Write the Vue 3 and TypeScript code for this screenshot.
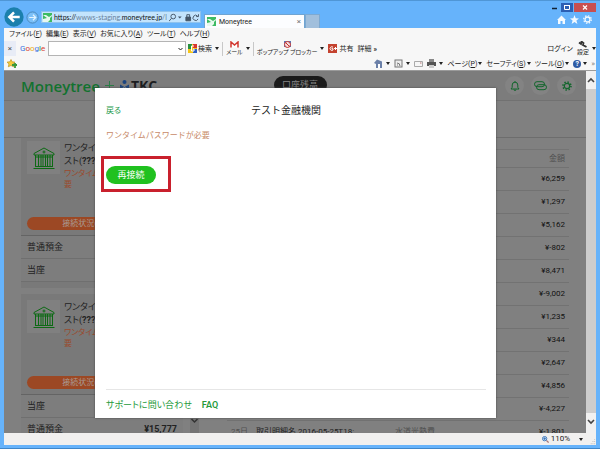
<script setup lang="ts">
interface Card {
  id: number
  rows: { name: string; amount: string }[]
}

interface Entry {
  day: string
  name: string
  category: string
  amount: string
}

const menus = [
  { label: 'ファイル', key: 'F' },
  { label: '編集', key: 'E' },
  { label: '表示', key: 'V' },
  { label: 'お気に入り', key: 'A' },
  { label: 'ツール', key: 'T' },
  { label: 'ヘルプ', key: 'H' },
]

const commands = [
  { label: 'ページ', key: 'P' },
  { label: 'セーフティ', key: 'S' },
  { label: 'ツール', key: 'O' },
]

const cards: Card[] = [
  { id: 1, rows: [{ name: '普通預金', amount: '' }, { name: '当座', amount: '' }] },
  { id: 2, rows: [{ name: '当座', amount: '' }, { name: '普通預金', amount: '¥15,777' }] },
]

const amounts = ['¥6,259', '¥1,297', '¥5,162', '¥-802', '¥8,471', '¥-9,002', '¥1,235', '¥344', '¥2,647', '¥4,856', '¥-4,227', '¥-1,801']
const entries: Entry[] = amounts.map((amount) => ({
  day: '25日',
  name: '取引明細名 2016-05-25T18:',
  category: '水道光熱費',
  amount,
}))
</script>

<template>
  <div class="window">
    <header class="titlebar">
      <div class="nav">
        <button class="back" aria-label="戻る">
          <svg viewBox="0 0 28 28"><circle cx="14" cy="14" r="13.5" fill="#1b80ad" /><path d="M22 14H8M14 7.500 7.500 14l6.500 6.500" fill="none" stroke="#fff" stroke-width="3.500" /></svg>
        </button>
        <button class="forward" aria-label="進む">
          <svg viewBox="0 0 14 14"><circle cx="7" cy="7" r="6" fill="#7cc0f8" stroke="#4a86b8" /><path d="M3.500 7h7M7.500 4l3 3-3 3" fill="none" stroke="#e4f4ff" stroke-width="1.300" /></svg>
        </button>
        <div class="address">
          <svg class="fav" viewBox="0 0 9 9"><rect width="9" height="9" fill="#3dbb63" /><path d="M0 2h3l3 2 3-2v1L7 5v2L5 9H0V6l4-1z" fill="#e8f8ee" /></svg>
          <span class="url">https://<i>wwws-staging.</i>moneytree.jp<i>/li</i></span>
          <svg class="tools" viewBox="0 0 32 9" fill="none" stroke="#456" stroke-width="1"><circle cx="4.500" cy="3.500" r="2.500" /><path d="M2.500 5.500 0 8.500" /><path d="M9.500 3.500h4l-2 2z" fill="#456" stroke="none" /><path d="M18 4h5v4h-5z" fill="#456" /><path d="M19 4V1.500h3V4" /><path d="M30.500 3A2.800 2.800 0 1 0 31 6M31.500 1v2.500H29" /></svg>
        </div>
      </div>
      <div class="tab">
        <svg class="fav" viewBox="0 0 9 9"><rect width="9" height="9" fill="#3dbb63" /><path d="M0 2h3l3 2 3-2v1L7 5v2L5 9H0V6l4-1z" fill="#e8f8ee" /></svg>
        <span>Moneytree</span>
        <button aria-label="タブを閉じる">×</button>
      </div>
      <button class="newtab" aria-label="新しいタブ"></button>
      <div class="corner">
        <div class="winbuttons">
          <button class="min" aria-label="最小化"><svg viewBox="0 0 12 9"><path d="M4 5.500h5" stroke="#123" stroke-width="1.500" /></svg></button>
          <button class="max" aria-label="最大化"><svg viewBox="0 0 12 9"><path d="M3.500 2.500h5v4h-5zM3 2.500h6" fill="none" stroke="#fff" stroke-width="1" /></svg></button>
          <button class="close" aria-label="閉じる"><svg viewBox="0 0 22 9"><path d="m9 2.500 4 4m0-4-4 4" stroke="#fff" stroke-width="1.200" /></svg></button>
        </div>
        <div class="stars">
          <svg viewBox="0 0 9 9"><path d="M0 5 4.500.5 9 5H8v4H5.500V6h-2v3H1V5z" fill="#f4faff" /></svg>
          <svg viewBox="0 0 9 9"><path d="m4.500 0 1.200 3.200L9 3.400 6.400 5.500l1 3.400-2.900-2-2.900 2 1-3.400L0 3.400l3.300-.2z" fill="#f4faff" /></svg>
          <svg viewBox="0 0 9 9" fill="none" stroke="#f4faff"><circle cx="4.500" cy="4.500" r="2.500" stroke-width="1.300" /><circle cx="4.500" cy="4.500" r="3.800" stroke-width="1.200" stroke-dasharray="1.500 1.480" /></svg>
        </div>
      </div>
    </header>

    <nav class="menubar">
      <button v-for="m in menus" :key="m.key">{{ m.label }}(<u>{{ m.key }}</u>)</button>
    </nav>

    <div class="googlebar">
      <button class="dismiss" aria-label="バーを閉じる">×</button>
      <span class="google"><b>G</b><b>o</b><b>o</b><b>g</b><b>l</b><b>e</b></span>
      <div class="combo">
        <input type="text" aria-label="Google 検索" />
        <svg viewBox="0 0 5 4"><path d="m.5 1 2 2 2-2" fill="none" stroke="#222" /></svg>
      </div>
      <button class="row search"><svg class="ico" viewBox="0 0 9 9"><rect width="9" height="9" fill="#f5c518" /><path d="M0 0h4v5H0z" fill="#27913f" /><path d="M5 0h4v4H5z" fill="#d6362f" /><path d="M5 5h4v4H5z" fill="#2e60c4" /><path d="M6 2H3.500v5H6V5H5" stroke="#fff" fill="none" /></svg>検索<s class="caret"></s></button>
      <i class="sep"></i>
      <button class="row"><span class="stack"><svg class="mailico" viewBox="0 0 9 7"><path d="M1 6.500V1l3.500 3L8 1v5.500" fill="#fff" stroke="#d2372f" stroke-width="1.500" /></svg>メール</span><s class="caret"></s></button>
      <i class="sep"></i>
      <button class="row"><span class="stack"><svg class="mailico" viewBox="0 0 9 7"><rect x="1" width="7" height="6" fill="#5878b8" /><circle cx="4.500" cy="3.500" r="3" fill="#f4dada" stroke="#c5302c" /><path d="m2.500 1.500 4 4" stroke="#c5302c" /></svg>ポップアップ ブロッカー</span><s class="caret"></s></button>
      <button class="row share"><svg class="ico" viewBox="0 0 9 9"><rect width="9" height="9" fill="#c4422f" /><path d="M5 3.200A1.800 1.800 0 1 0 5 6V4.700H3.500M6 4.500h3M7.500 3v3" stroke="#fff" fill="none" /></svg>共有</button>
      <button class="row more">詳細 <b>»</b></button>
      <button class="row login">ログイン</button>
      <button class="row"><span class="stack"><svg class="mailico" viewBox="0 0 9 7"><path d="M1 1.500 3 3 3.500.5 5.500 2 5 4l3.500 2" fill="none" stroke="#333" stroke-width="1.800" /></svg>設定</span><s class="caret"></s></button>
    </div>

    <div class="commandbar">
      <svg class="favadd" viewBox="0 0 10 9"><path d="m4 .5 1.200 2.300 2.800.3L6 5l.5 2.800L4 6.500 1.300 7.800 1.900 5 0 3.100l2.800-.3z" fill="#f7cb3b" stroke="#b08a16" stroke-width=".6" /><path d="M5 6h5M8 4v5" stroke="#3b9a3a" stroke-width="1.800" /></svg>
      <div class="cmds">
        <button class="row" aria-label="ホーム"><svg class="ico" viewBox="0 0 9 9"><path d="m0 4 3-3.500 5 2V9H2V5z" fill="#6b80a8" /><path d="M4 5h2v4H4z" fill="#fff" /></svg><s class="caret"></s></button>
        <button class="row" aria-label="フィード"><svg class="ico" viewBox="0 0 9 9"><rect x="1" y="1" width="7" height="7" fill="#eee" stroke="#777" /><path d="M3 4a3 3 0 0 1 3 3M3 6h1" fill="none" stroke="#777" /></svg><s class="caret"></s></button>
        <button class="row" aria-label="メール"><svg class="ico" viewBox="0 0 9 9"><path d="M.5 2.500h8v5h-8z" fill="#f6f6f6" stroke="#aaa" /><path d="M6 4h1.500" stroke="#b77" /></svg></button>
        <button class="row" aria-label="印刷"><svg class="ico" viewBox="0 0 9 9"><path d="M2 0h5v3H2z" fill="#888" /><path d="M0 3h9v4H0z" fill="#555" /><path d="M2 6h5v3H2z" fill="#ccc" /></svg><s class="caret"></s></button>
        <button v-for="c in commands" :key="c.key" class="row text">{{ c.label }}(<u>{{ c.key }}</u>)<s class="caret"></s></button>
        <button class="row help" aria-label="ヘルプ"><span>?</span><s class="caret"></s></button>
        <small>»</small>
      </div>
    </div>

    <div class="viewport">
      <main class="page">
        <div class="apphead">
          <span class="logo">Moneytree</span>
          <svg class="plus" viewBox="0 0 9 9"><path d="M0 4.500h9M4.500 0v9" stroke="#2c7d48" /></svg>
          <svg class="tkcmark" viewBox="0 0 11 11"><circle cx="5.500" cy="2" r="2" fill="#1c4580" /><path d="M1 4.500 5.500 7 10 4.500V9l1 2H0l1-2z" fill="#1c4580" /><path d="M2.500 9 5.500 7l3 2" stroke="#8090a0" fill="none" /></svg>
          <span class="tkc">TKC</span>
          <div class="pillwrap"><button class="pill">口座残高</button></div>
          <div class="actions">
            <button aria-label="通知"><svg viewBox="0 0 10 10"><path d="M1 8h8L7.800 6.300V4A2.800 2.800 0 0 0 2.200 4v2.300zM4 8.500a1 1 0 0 0 2 0M5 1V0" /></svg></button>
            <button aria-label="メッセージ"><svg class="wide" viewBox="0 0 13 10"><rect x=".5" y=".7" width="10" height="5" rx="2.500" /><rect x="2.500" y="3.700" width="10" height="5" rx="2.500" /></svg></button>
            <button aria-label="設定"><svg viewBox="0 0 10 10"><circle cx="5" cy="5" r="2.700" stroke-width="1.200" /><circle cx="5" cy="5" r="4" stroke-width="1.600" stroke-dasharray="1.400 1.740" /></svg></button>
          </div>
        </div>
        <div class="subhead"></div>
        <div class="columns">
          <aside class="cards">
            <article v-for="c in cards" :key="c.id" class="card">
              <div class="bank">
                <div class="thumb">
                  <svg viewBox="0 0 24 24" fill="none" stroke="#0d6a14"><path d="M2 7.500 12 2l10 5.500v1.500H2zM3 20.500h18M1.500 22.500h21M3.500 9v11M6.500 9v11M9 9v11M11 9v11M13.500 9v11M15.500 9v11M18 9v11M20.500 9v11M3.500 11h17" /><circle cx="12" cy="6" r="1" /></svg>
                </div>
                <div class="who">
                  <p class="name">ワンタイムパスワードテ<br />スト(<b>???</b>)</p>
                  <p class="warn">ワンタイムパスワードが必<br />要</p>
                </div>
              </div>
              <button class="fix">接続状況の確認が必要</button>
              <ul>
                <li v-for="r in c.rows" :key="r.name"><span>{{ r.name }}</span><b>{{ r.amount }}</b></li>
              </ul>
            </article>
          </aside>
          <div class="gutter"><svg viewBox="0 0 9 9"><path d="m1.500 3 3 3 3-3" fill="none" stroke="#333" stroke-width="1.500" /></svg></div>
          <section class="ledger">
            <table>
              <colgroup><col class="cday" /><col /><col class="ccat" /><col class="camt" /></colgroup>
              <thead><tr><th></th><th></th><th></th><th>金額</th></tr></thead>
              <tbody>
                <tr v-for="(e, i) in entries" :key="i"><td class="soft">{{ e.day }}</td><td>{{ e.name }}</td><td class="soft">{{ e.category }}</td><td class="amt">{{ e.amount }}</td></tr>
              </tbody>
            </table>
          </section>
        </div>
      </main>
      <div class="scrollbar">
        <svg viewBox="0 0 10 18"><path d="m2 11 3-3 3 3" fill="none" stroke="#444" stroke-width="1.600" /></svg>
        <div class="track"></div>
        <svg viewBox="0 0 10 20"><path d="m2 7 3 3 3-3" fill="none" stroke="#444" stroke-width="1.600" /></svg>
      </div>

      <div class="overlay">
        <div class="dialog" role="dialog" aria-labelledby="dialog-title">
          <div class="dhead"><a href="#">戻る</a><h1 id="dialog-title">テスト金融機関</h1></div>
          <p class="need">ワンタイムパスワードが必要</p>
          <div class="mark"><button>再接続</button></div>
          <footer><a href="#">サポートに問い合わせ</a><a href="#" class="faq">FAQ</a></footer>
        </div>
      </div>
    </div>

    <footer class="status">
      <svg viewBox="0 0 8 8"><path d="m5 5 2.500 2.500" stroke="#a77" stroke-width="1.500" /><circle cx="3" cy="3" r="2.500" fill="#cfe6ff" stroke="#3a72b5" /><path d="M1.500 3h3M3 1.500v3" stroke="#3a72b5" /></svg>
      <span>110%</span><s class="caret"></s>
      <svg class="grip" viewBox="0 0 8 8"><path d="M6 1h1v1H6zM4 3.500h1v1H4zM6 3.500h1v1H6zM2 6h1v1H2zM4 6h1v1H4zM6 6h1v1H6z" fill="#bbb" /></svg>
    </footer>
  </div>
</template>

<style>
body { margin: 0; }
</style>

<style scoped>
* { box-sizing: border-box; }
svg { display: block; flex: none; }
button { border: 0; padding: 0; margin: 0; background: none; font: inherit; color: inherit; white-space: nowrap; }
p, h1, ul { margin: 0; padding: 0; font-weight: 400; }
a { text-decoration: none; color: inherit; }
.window { height: 100vh; display: flex; flex-direction: column; padding: 0 4px 3px; background: #66b3fb; border-bottom: 1px solid #3f86c8; border-top: 1px solid #4f96d6; overflow: hidden; font: 8px/12px Roboto, "Noto Sans CJK JP", sans-serif; font-feature-settings: "palt"; color: #222; }
.caret { width: 0; height: 0; border: 2px solid transparent; border-top: 3px solid #222; border-bottom: 0; margin-left: 3px; flex: none; }
.ico { width: 9px; height: 9px; }
.row { display: flex; align-items: center; }

.titlebar { display: flex; align-items: flex-end; height: 27px; flex: none; }
.nav { display: flex; align-items: center; flex: 0 0 197px; min-width: 0; }
.back svg { width: 20px; height: 22px; }
.forward { margin: 0 2px; }
.forward svg { width: 13px; height: 13px; }
.address { flex: 1; min-width: 0; display: flex; align-items: center; gap: 2px; height: 12px; padding: 0 1px; background: #c3e4fd; border: 1px solid #8fc3ee; }
.fav { width: 9px; height: 9px; }
.url { flex: 1; min-width: 0; overflow: hidden; white-space: nowrap; color: #111; font: 7px/12px Lato, sans-serif; }
.url i { font-style: normal; color: #69819a; }
.tools { width: 30px; height: 9px; }
.tab { display: flex; align-items: center; gap: 3px; width: 101px; height: 14px; margin-left: 3px; padding: 0 3px 0 2px; background: #fcfdff; border: 1px solid #6fa4d2; border-bottom: 0; }
.tab span { flex: 1; font-size: 7px; }
.tab button { color: #777; }
.newtab { width: 15px; height: 14px; background: #a1bfdc; border: 1px solid #7ca9d2; border-bottom: 0; }
.corner { margin-left: auto; align-self: stretch; display: flex; flex-direction: column; align-items: flex-end; padding-top: 2px; }
.winbuttons { display: flex; gap: 1px; }
.winbuttons svg { width: 12px; height: 9px; }
.winbuttons .close svg { width: 22px; }
.max { background: #2c5fb3; }
.close { background: #c84f50; }
.stars { display: flex; gap: 4px; padding: 3px 4px 0 0; }
.stars svg { width: 9px; height: 9px; }

.menubar { display: flex; gap: 4px; padding: 0 5px; background: #f7f7f7; flex: none; height: 12px; font-size: 7px; }
.googlebar { display: flex; align-items: center; height: 17px; background: #f7f7f7; flex: none; font-size: 7px; }
.dismiss { width: 12px; height: 15px; background: #e8ecf6; color: #555; font-size: 8px; }
.google { margin: 0 2px 0 4px; font-size: 8px; width: 26px; }
.google b { font-weight: 400; color: #3b73e0; }
.google b:nth-child(2), .google b:nth-child(6) { color: #d8402f; }
.google b:nth-child(3) { color: #e8ae14; }
.google b:nth-child(5) { color: #2f9c4a; }
.combo { display: flex; align-items: center; width: 138px; height: 15px; background: #fff; border: 1px solid #b4b4b4; padding-right: 2px; }
.combo input { flex: 1; min-width: 0; border: 0; padding: 0 2px; height: 11px; background: none; font: inherit; outline: 0; }
.combo svg { width: 5px; height: 4px; }
.search { margin-left: 2px; gap: 1px; }
.search .caret { margin-left: 2px; }
.sep { width: 1px; height: 14px; background: #c8c8c8; margin: 0 3px; }
.stack { display: flex; flex-direction: column; align-items: center; font-size: 6px; line-height: 8px; }
.mailico { width: 9px; height: 7px; }
.share { margin-left: 4px; gap: 2px; }
.more { margin-left: 4px; gap: 2px; }
.login { margin: 0 4px 0 auto; }
.commandbar { display: flex; align-items: center; justify-content: space-between; height: 14px; padding: 0 1px 0 3px; background: #f7f7f7; flex: none; border-bottom: 1px solid #9a9a9a; font-size: 7px; }
.favadd { width: 10px; height: 9px; }
.cmds { display: flex; align-items: center; gap: 4px; }
.text .caret { margin-left: 1px; }
.help span { width: 8px; height: 8px; border-radius: 50%; background: #2e5ba5; color: #fff; font-weight: 700; line-height: 8px; }
.help .caret { margin-left: 2px; }
.cmds small { font-size: 8px; color: #888; }

.viewport { position: relative; flex: 1; min-height: 0; display: flex; overflow: hidden; }
.page { flex: 1; min-width: 0; display: flex; flex-direction: column; background: #808080; overflow: hidden; }
.apphead { display: flex; align-items: center; flex: none; height: 30px; padding: 0 10px 0 17px; background: #7c7c7c; border-bottom: 1px solid #717171; position: relative; }
.logo { font: 600 15px/20px "Open Sans", sans-serif; color: #12722f; }
.plus { width: 9px; height: 9px; margin: 0 5px 0 5px; }
.tkcmark { width: 11px; height: 11px; }
.tkc { font: 700 14px/18px "Open Sans", sans-serif; color: #1c1e22; margin-left: 1px; }
.pillwrap { position: absolute; inset: 5px 0 auto; display: flex; justify-content: center; padding-left: 10px; }
.pill { width: 53px; height: 18px; border-radius: 9px; background: #1b1b1b; color: #858585; font-size: 9px; }
.actions { position: relative; display: flex; gap: 7px; margin-left: auto; }
.actions button { display: grid; place-items: center; width: 19px; height: 19px; border-radius: 50%; background: #838383; }
.actions svg { width: 10px; height: 10px; fill: none; stroke: #12662c; }
.actions .wide { width: 13px; }
.subhead { flex: none; height: 37px; border-bottom: 1px solid #6d6d6d; }
.columns { flex: 1; min-height: 0; display: flex; overflow: hidden; padding: 0 17px; }
.cards { flex: 0 0 162px; }
.card { background: #797979; padding: 6px 6px 0; margin-bottom: 6px; }
.card:first-child { padding-top: 3px; }
.card ul { list-style: none; margin: 5px -6px 0; border-top: 1px solid #646464; padding-bottom: 6px; }
.bank { display: flex; gap: 4px; height: 76px; }
.thumb { display: grid; place-items: center; width: 33px; height: 33px; background: #808080; }
.thumb svg { width: 24px; height: 24px; }
.name { font-size: 9px; line-height: 13px; padding-top: 1px; white-space: nowrap; }
.warn { font-size: 8px; line-height: 11px; color: #9a4a2c; white-space: nowrap; }
.fix { display: block; width: 100%; height: 13px; border-radius: 7px; background: #9c4824; color: #a99a92; font-size: 8px; line-height: 13px; }
.card li { display: flex; justify-content: space-between; align-items: center; height: 23px; padding: 0 6px; border-bottom: 1px solid #6f6f6f; background: #7d7d7d; font-size: 9px; }
.card b { font-weight: 700; }
.gutter { width: 9px; margin: 0 28px 0 7px; background: #747474; display: flex; align-items: flex-end; padding-bottom: 8px; }
.gutter svg { width: 9px; height: 9px; }
.ledger { flex: 1; min-width: 0; padding-top: 11px; }
table { width: 100%; table-layout: fixed; border-collapse: collapse; }
.cday { width: 25px; }
.ccat { width: 98px; }
.camt { width: 80px; }
th { height: 18px; border-top: 1px solid #747474; color: #505050; font-weight: 400; text-align: right; padding: 0 4px; }
th, td { border-bottom: 1px solid #727272; line-height: 12px; }
td { height: 23px; padding: 0 4px; white-space: nowrap; }
.soft { color: #505050; }
.amt { text-align: right; color: #111; }
.scrollbar { width: 10px; flex: none; display: flex; flex-direction: column; background: #f0f0f0; }
.scrollbar svg { width: 10px; }
.track { flex: 1; background: #cdcdcd; }

.overlay { position: absolute; inset: 0; padding: 17px 100px 15px 91px; display: flex; }
.dialog { flex: 1; display: flex; flex-direction: column; padding: 15px 10px 0 11px; background: #fff; box-shadow: 0 0 2px #444; }
.dhead { display: grid; grid-template-columns: 1fr auto 1fr; align-items: center; height: 16px; padding-right: 20px; font-size: 8px; color: #259a4b; }
.dhead h1 { font-size: 10px; line-height: 16px; color: #222; font-feature-settings: normal; }
.need { margin-top: 9px; font-size: 8px; line-height: 16px; color: #c78a68; font-feature-settings: normal; }
.mark { align-self: flex-start; margin: 12px 0 0 -5px; padding: 7px 12px 5px 2px; border: 3px solid #c9202d; }
.mark button { display: block; width: 50px; height: 18px; border-radius: 9px; background: #20c11f; color: #fff; font-size: 9px; line-height: 18px; }
.dialog footer { display: flex; align-items: center; gap: 10px; margin-top: auto; height: 29px; padding-top: 1px; border-top: 1px solid #e6e6e6; font-size: 9px; color: #259a3b; }
.faq { font-weight: 600; }
.status { display: flex; align-items: center; justify-content: flex-end; flex: none; height: 12px; background: #f1f0ef; }
.status svg { width: 7px; height: 7px; margin-right: 2px; }
.status .caret { margin-left: 9px; }
.status .grip { margin: 4px 0 0 6px; width: 7px; }
</style>
